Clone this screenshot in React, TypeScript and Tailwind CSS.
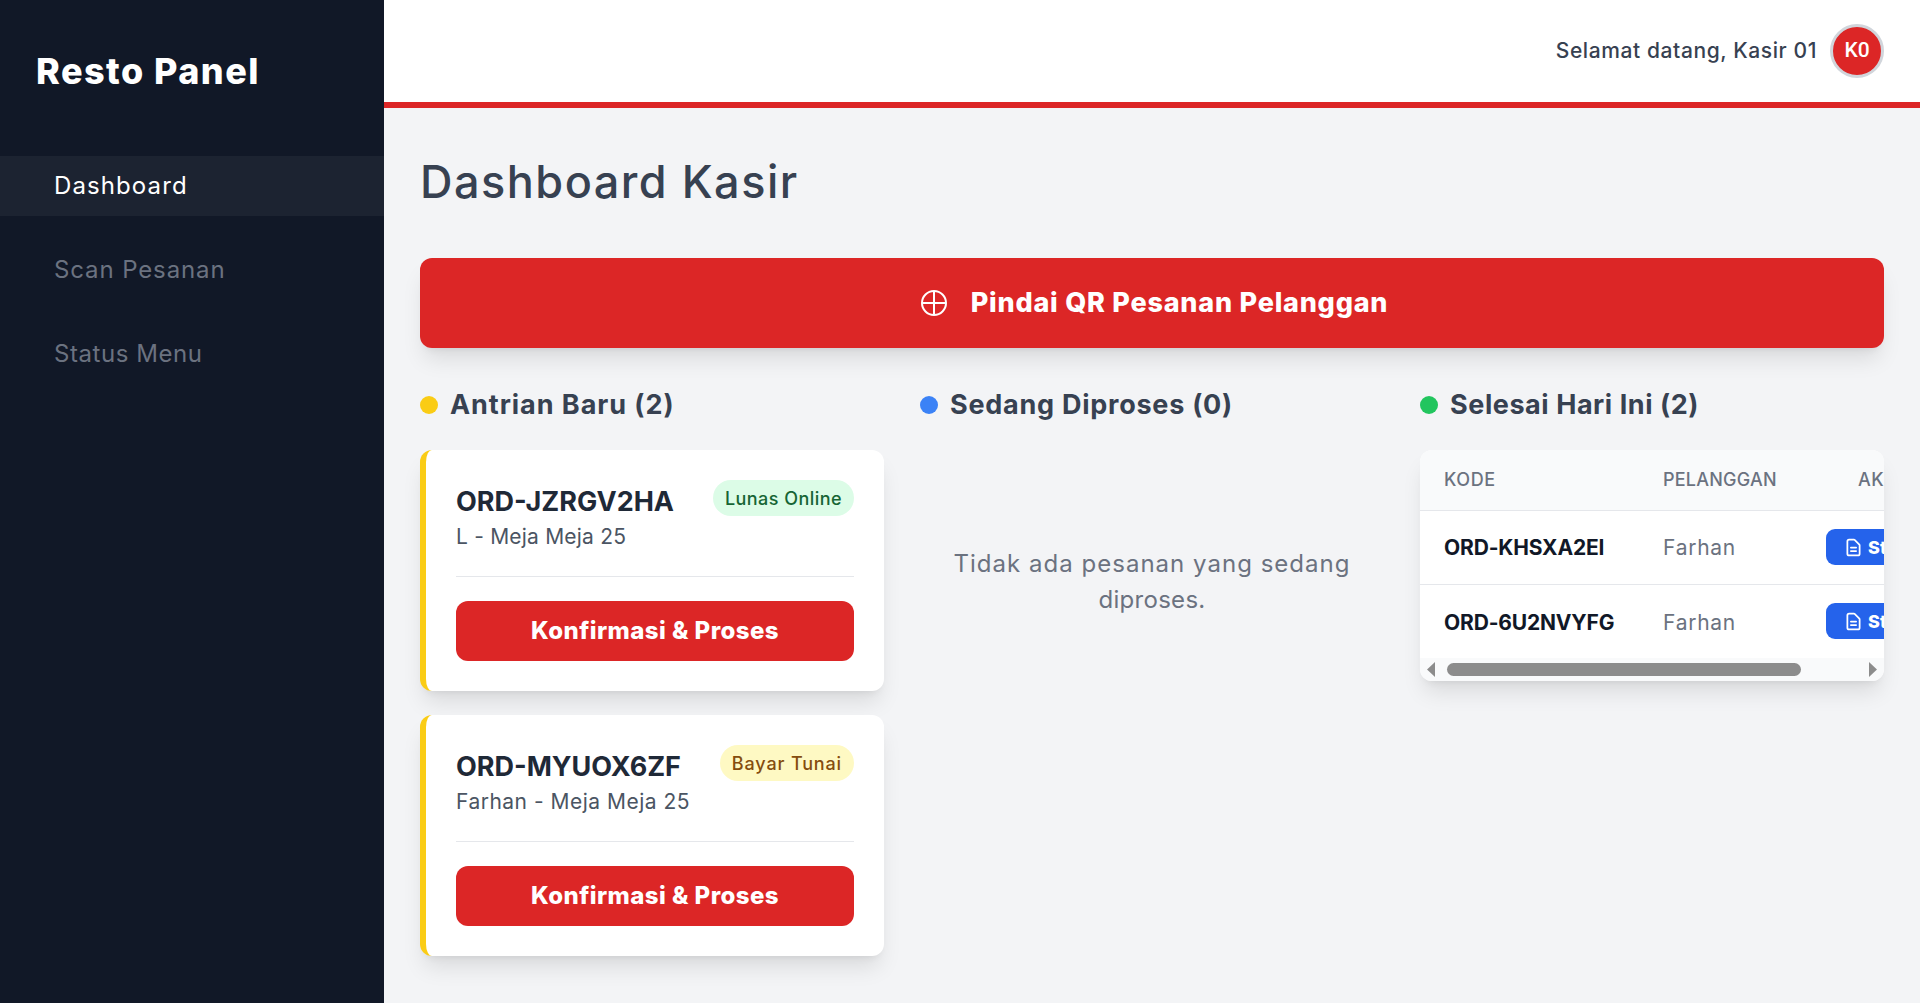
import React from 'react';

const navItems = [
  { label: 'Dashboard', cls: 'bg-[#1c2331] text-white tracking-[1.1px]' },
  { label: 'Scan Pesanan', cls: 'text-[#6b7280] tracking-[0.88px]' },
  { label: 'Status Menu', cls: 'text-[#6b7280] tracking-[0.55px]' },
];

const orders = [
  {
    code: 'ORD-JZRGV2HA',
    customer: 'L - Meja Meja 25',
    badge: 'Lunas Online',
    badgeCls: 'bg-[#dcfce7] text-[#166534] tracking-[0.45px]',
    subCls: 'tracking-[0.2px]',
  },
  {
    code: 'ORD-MYUOX6ZF',
    customer: 'Farhan - Meja Meja 25',
    badge: 'Bayar Tunai',
    badgeCls: 'bg-[#fef9c3] text-[#854d0e] tracking-[0.85px]',
    subCls: 'tracking-[0.5px]',
  },
];

const doneOrders = [
  { code: 'ORD-KHSXA2EI', customer: 'Farhan' },
  { code: 'ORD-6U2NVYFG', customer: 'Farhan' },
];

const Sidebar: React.FC = () => (
  <aside className="w-[384px] shrink-0 bg-[#111827]">
    <div className="pl-[36px] pt-[44px] h-[98px] mb-[58px]">
      <div className="h-[54px] flex items-center text-[36px] font-extrabold text-white tracking-[1.45px]">Resto Panel</div>
    </div>
    <nav className="flex flex-col gap-[24px]">
      {navItems.map(item => (
        <a key={item.label} className={`h-[60px] flex items-center pl-[54px] text-[24px] ${item.cls}`}>
          {item.label}
        </a>
      ))}
    </nav>
  </aside>
);

const Header: React.FC = () => (
  <header className="h-[108px] shrink-0 bg-white border-b-[6px] border-[#dc2626] flex items-center justify-end pr-[36px] gap-[13px]">
    <span className="text-[21px] font-medium text-[#374151] tracking-[0.6px]">Selamat datang, Kasir 01</span>
    <div className="w-[54px] h-[54px] rounded-full bg-[#dc2626] border-[3px] border-[#d1d5db] flex items-center justify-center text-[21px] font-medium text-white font-['Roboto',sans-serif]">
      K0
    </div>
  </header>
);

const SectionTitle: React.FC<{ dot: string; label: string; cls: string }> = ({ dot, label, cls }) => (
  <div className="h-[40px] mb-[25px] flex items-center gap-[12px]">
    <span className={`w-[18px] h-[18px] rounded-full ${dot}`} />
    <h2 className={`text-[27px] font-bold text-[#374151] ${cls}`}>{label}</h2>
  </div>
);

const OrderCard: React.FC<{ order: (typeof orders)[number] }> = ({ order }) => (
  <div className="bg-white rounded-[12px] border-l-[6px] border-[#facc15] p-[30px] shadow-[0_15px_22px_-4px_rgba(0,0,0,0.1),0_6px_9px_-6px_rgba(0,0,0,0.1)]">
    <div className="flex justify-between items-start h-[65px]">
      <div>
        <div className="text-[27px] leading-[36px] mt-[4px] font-bold text-[#1f2937]">{order.code}</div>
        <div className={`text-[21px] leading-[34px] text-[#4b5563] ${order.subCls}`}>{order.customer}</div>
      </div>
      <span className={`h-[36px] px-[12px] rounded-full flex items-center text-[18px] font-medium ${order.badgeCls}`}>
        {order.badge}
      </span>
    </div>
    <div className="border-t border-[#e5e7eb] mt-[31px] pt-[24px]">
      <button className="w-full h-[60px] rounded-[12px] bg-[#dc2626] text-white text-[24px] font-extrabold tracking-[0.45px]">
        Konfirmasi &amp; Proses
      </button>
    </div>
  </div>
);

const DoneTable: React.FC = () => (
  <div className="bg-white rounded-[12px] overflow-hidden shadow-[0_15px_22px_-4px_rgba(0,0,0,0.1),0_6px_9px_-6px_rgba(0,0,0,0.1)]">
    <div className="overflow-hidden">
      <table className="w-[570px] table-fixed">
        <thead>
          <tr className="h-[60px] bg-[#f9fafb] border-b border-[#e5e7eb] text-left text-[18px] font-medium text-[#6b7280] uppercase">
            <th className="w-[219px] pl-[24px] font-medium tracking-[0.6px]">Kode</th>
            <th className="w-[163px] pl-[24px] font-medium tracking-[0.23px]">Pelanggan</th>
            <th className="pl-[56px] font-medium tracking-[0.6px]">Aksi</th>
          </tr>
        </thead>
        <tbody>
          {doneOrders.map(o => (
            <tr key={o.code} className="h-[74px] border-b border-[#e5e7eb] last:border-b-0">
              <td className="pl-[24px] pt-[2px] text-[21px] font-bold text-[#111827] tracking-[-0.17px]">{o.code}</td>
              <td className="pl-[24px] pt-[2px] text-[21px] text-[#6b7280] tracking-[0.75px]">{o.customer}</td>
              <td className="pl-[24px]">
                <button className="h-[36px] rounded-[9px] bg-[#2563eb] pl-[17px] pr-[15px] flex items-center gap-[4px] text-[18px] font-extrabold text-white">
                  <svg viewBox="0 0 24 24" className="w-[21px] h-[21px]" fill="none" stroke="currentColor" strokeWidth="2" strokeLinecap="round" strokeLinejoin="round">
                    <path d="M9 12h6m-6 4h6m2 5H7a2 2 0 01-2-2V5a2 2 0 012-2h5.586a1 1 0 01.707.293l5.414 5.414a1 1 0 01.293.707V19a2 2 0 01-2 2z" />
                  </svg>
                  Struk
                </button>
              </td>
            </tr>
          ))}
        </tbody>
      </table>
    </div>
    <div className="h-[23px] bg-[#f9fafb] flex items-center px-[7px] gap-[12px]">
      <svg viewBox="0 0 8 15" className="w-[8px] h-[15px] fill-[#8c8c8c] shrink-0"><path d="M8 0v15L0 7.5z" /></svg>
      <div className="w-[354px] h-[13px] rounded-full bg-[#8c8c8c]" />
      <svg viewBox="0 0 8 15" className="w-[8px] h-[15px] fill-[#8c8c8c] shrink-0 ml-auto"><path d="M0 0v15l8-7.5z" /></svg>
    </div>
  </div>
);

export default function App() {
  return (
    <div className="flex h-[1003px] overflow-hidden bg-[#f3f4f6] font-['Inter',sans-serif]">
      <Sidebar />
      <div className="flex-1 min-w-0 flex flex-col">
        <Header />
        <main className="px-[36px] pt-[47px]">
          <h1 className="h-[54px] leading-[54px] mb-[49px] text-[45px] font-medium text-[#374151] tracking-[1.5px]">Dashboard Kasir</h1>
          <button className="w-full h-[90px] mb-[37px] pl-[5px] rounded-[12px] bg-[#dc2626] flex items-center justify-center gap-[24px] text-[27px] font-extrabold text-white tracking-[0.77px] shadow-[0_15px_22px_-4px_rgba(0,0,0,0.1),0_6px_9px_-6px_rgba(0,0,0,0.1)]">
            <svg viewBox="0 0 26 26" className="w-[26px] h-[26px]" fill="none" stroke="currentColor" strokeWidth="2">
              <circle cx="13" cy="13" r="12" />
              <path d="M13 1v24M1 13h24" />
            </svg>
            Pindai QR Pesanan Pelanggan
          </button>
          <div className="grid grid-cols-3 gap-[36px]">
            <section>
              <SectionTitle dot="bg-[#facc15]" label="Antrian Baru (2)" cls="tracking-[0.95px]" />
              <div className="flex flex-col gap-[24px]">
                {orders.map(o => <OrderCard key={o.code} order={o} />)}
              </div>
            </section>
            <section>
              <SectionTitle dot="bg-[#3b82f6]" label="Sedang Diproses (0)" cls="tracking-[0.75px]" />
              <p className="pt-[96px] text-center text-[24px] leading-[36px] text-[#6b7280] tracking-[1.02px]">
                Tidak ada pesanan yang sedang
                <br />
                <span className="tracking-[0.3px]">diproses.</span>
              </p>
            </section>
            <section>
              <SectionTitle dot="bg-[#22c55e]" label="Selesai Hari Ini (2)" cls="tracking-[0.56px]" />
              <DoneTable />
            </section>
          </div>
        </main>
      </div>
    </div>
  );
}
